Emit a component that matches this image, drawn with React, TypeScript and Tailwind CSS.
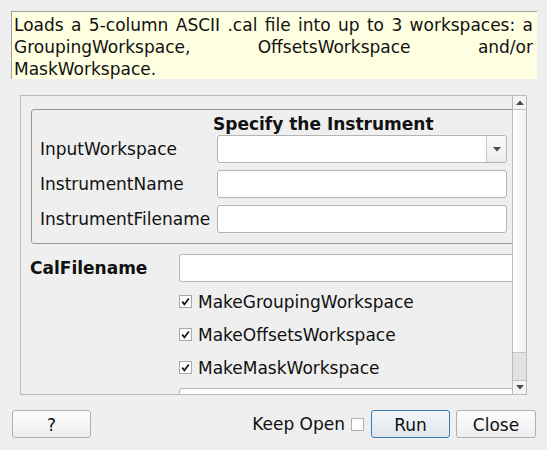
import React from "react";

const Tri = ({ up }: { up?: boolean }) => (
  <svg width="8" height="5" viewBox="0 0 8 5">
    {up ? <path d="M0 5 L4 0.5 L8 5 Z" fill="#4a4a4a" /> : <path d="M0 0 L8 0 L4 4.5 Z" fill="#4a4a4a" />}
  </svg>
);

const Check = ({ checked }: { checked?: boolean }) => (
  <div className="w-[13px] h-[13px] border border-[#a8a8a8] bg-white flex items-center justify-center shrink-0">
    {checked && (
      <svg width="9" height="9" viewBox="0 0 9 9">
        <path d="M1.2 4.6 L3.4 7.4 L7.8 1.4" stroke="#111" strokeWidth="1.7" fill="none" />
      </svg>
    )}
  </div>
);

const Input = ({ className = "" }: { className?: string }) => (
  <div className={"h-[28px] bg-white border border-[#b4b4b4] rounded-[3px] " + className} />
);

export default function App() {
  return (
    <div
      className="w-[547px] h-[450px] bg-[#efefef] text-[17px] text-[#111] overflow-hidden flex flex-col"
      style={{ fontFamily: '"DejaVu Sans", Verdana, sans-serif' }}
    >
      {/* description */}
      <div className="mt-[11px] ml-[11px] w-[526px] h-[68px] bg-[#ffffe1] border-t border-l border-[#a0a0a0] pl-[2px] pr-[4px] pt-[2px] leading-[22px] text-justify">
        Loads a 5-column ASCII .cal file into up to 3 workspaces: a GroupingWorkspace, OffsetsWorkspace and/or MaskWorkspace.
      </div>

      {/* scroll area */}
      <div className="mt-[16px] ml-[20px] w-[507px] h-[300px] border border-[#b9b9b9] flex">
        <div className="w-[491px] h-full overflow-hidden relative">
          <div className="w-[506px] pl-[10px] pt-[13px]">
            {/* groupbox */}
            <div className="w-[486px] border border-[#999] rounded-[3px] pt-[4px] pb-[10px] pl-[8px] pr-[9px]">
              <div className="h-[20px] leading-[20px] font-bold pl-[173px] whitespace-nowrap">Specify the Instrument</div>
              <div className="mt-[1px] flex flex-col gap-[7px]">
                <div className="flex items-center h-[28px]">
                  <div className="w-[177px] pt-[2px]">InputWorkspace</div>
                  <div className="flex-1 h-[28px] bg-white border border-[#b4b4b4] rounded-[3px] flex justify-end">
                    <div className="w-[20px] h-full border-l border-[#c8c8c8] bg-gradient-to-b from-[#fafafa] to-[#ececec] rounded-r-[3px] flex items-center justify-center">
                      <Tri />
                    </div>
                  </div>
                </div>
                <div className="flex items-center h-[28px]">
                  <div className="w-[177px] pt-[2px]">InstrumentName</div>
                  <Input className="flex-1" />
                </div>
                <div className="flex items-center h-[28px]">
                  <div className="w-[177px] pt-[2px] whitespace-nowrap">InstrumentFilename</div>
                  <Input className="flex-1" />
                </div>
              </div>
            </div>

            {/* CalFilename */}
            <div className="mt-[10px] flex items-center h-[28px] -ml-[1px]">
              <div className="w-[149px] pt-[2px] font-bold">CalFilename</div>
              <Input className="w-[340px]" />
            </div>
            <div className="mt-[3px] flex flex-col">
              {["MakeGroupingWorkspace", "MakeOffsetsWorkspace", "MakeMaskWorkspace"].map((t) => (
                <div key={t} className="h-[33px] flex items-center pl-[148px] gap-[6px]">
                  <Check checked />
                  <span className="pt-[2px]">{t}</span>
                </div>
              ))}
            </div>
            <div className="mt-[4px] ml-[148px] w-[340px] h-[28px] bg-white border border-[#b4b4b4] rounded-[3px]" />
          </div>
        </div>
        {/* scrollbar */}
        <div className="w-[14px] h-full border-l border-[#b9b9b9] flex flex-col">
          <div className="h-[14px] border-b border-[#c4c4c4] bg-[#f4f4f4] flex items-center justify-center">
            <Tri up />
          </div>
          <div className="flex-1 bg-gradient-to-r from-[#ffffff] to-[#f0f0f0]" />
          <div className="h-[28px] bg-[#e2e2e2] border-t border-[#c4c4c4]" />
          <div className="h-[14px] border-t border-[#c4c4c4] bg-[#f4f4f4] flex items-center justify-center">
            <Tri />
          </div>
        </div>
      </div>

      {/* buttons */}
      <div className="mt-[15px] h-[28px] flex items-center pl-[12px] pr-[11px]">
        <button className="w-[79px] h-[28px] pt-[2px] border border-[#b0b0b0] rounded-[3px] bg-gradient-to-b from-[#fdfdfd] to-[#ededed]">?</button>
        <div className="flex-1" />
        <span className="pt-[2px]">Keep Open</span>
        <div className="ml-[6px] w-[13px] h-[13px] border border-[#b0b0b0] bg-white" />
        <button className="ml-[7px] w-[79px] h-[28px] pt-[2px] border border-[#3b78b4] rounded-[3px] bg-gradient-to-b from-[#f3f6f9] to-[#dfe6ed]">Run</button>
        <button className="ml-[6px] w-[80px] h-[28px] pt-[2px] border border-[#b0b0b0] rounded-[3px] bg-gradient-to-b from-[#fdfdfd] to-[#ededed]">Close</button>
      </div>
    </div>
  );
}
